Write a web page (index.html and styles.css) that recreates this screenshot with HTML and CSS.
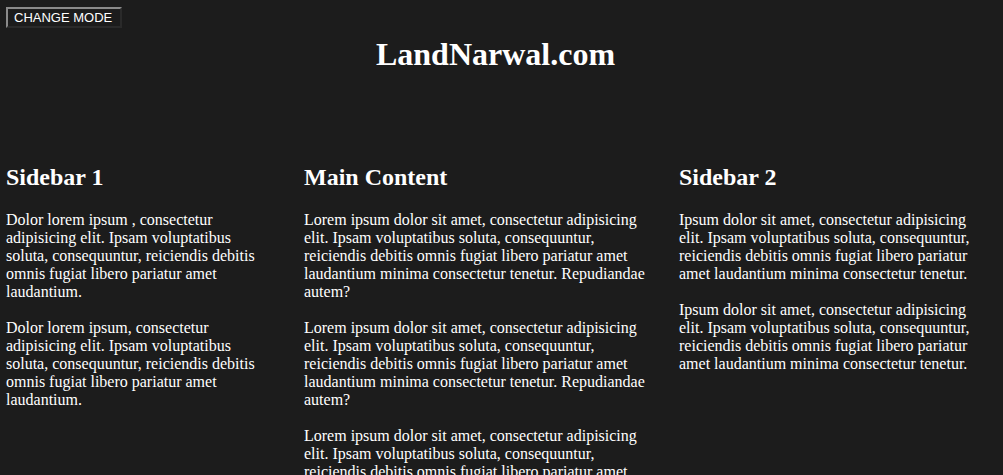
FILE: index.html
```html
<!DOCTYPE html>
<html lang="en">
<head>
<meta charset="utf-8">
<title>LandNarwal.com</title>
<link rel="stylesheet" href="styles.css">
</head>
<body>
<div class="page">
  <header class="header">
    <button class="mode-btn" type="button">CHANGE MODE</button>
    <h1 class="site-title">LandNarwal.com</h1>
  </header>
  <div class="columns">
    <aside class="col col--narrow">
      <h2 class="col-title">Sidebar 1</h2>
      <p class="text">Dolor lorem ipsum , consectetur adipisicing elit. Ipsam voluptatibus soluta, consequuntur, reiciendis debitis omnis fugiat libero pariatur amet laudantium.</p>
      <p class="text">Dolor lorem ipsum, consectetur adipisicing elit. Ipsam voluptatibus soluta, consequuntur, reiciendis debitis omnis fugiat libero pariatur amet laudantium.</p>
    </aside>
    <main class="col">
      <h2 class="col-title">Main Content</h2>
      <p class="text">Lorem ipsum dolor sit amet, consectetur adipisicing elit. Ipsam voluptatibus soluta, consequuntur, reiciendis debitis omnis fugiat libero pariatur amet laudantium minima consectetur tenetur. Repudiandae autem?</p>
      <p class="text">Lorem ipsum dolor sit amet, consectetur adipisicing elit. Ipsam voluptatibus soluta, consequuntur, reiciendis debitis omnis fugiat libero pariatur amet laudantium minima consectetur tenetur. Repudiandae autem?</p>
      <p class="text">Lorem ipsum dolor sit amet, consectetur adipisicing elit. Ipsam voluptatibus soluta, consequuntur, reiciendis debitis omnis fugiat libero pariatur amet laudantium minima consectetur tenetur. Repudiandae autem?</p>
    </main>
    <aside class="col">
      <h2 class="col-title">Sidebar 2</h2>
      <p class="text">Ipsum dolor sit amet, consectetur adipisicing elit. Ipsam voluptatibus soluta, consequuntur, reiciendis debitis omnis fugiat libero pariatur amet laudantium minima consectetur tenetur.</p>
      <p class="text">Ipsum dolor sit amet, consectetur adipisicing elit. Ipsam voluptatibus soluta, consequuntur, reiciendis debitis omnis fugiat libero pariatur amet laudantium minima consectetur tenetur.</p>
    </aside>
  </div>
</div>
</body>
</html>
```
FILE: styles.css
```css
html, body {
  margin: 0;
  background: #1c1c1c;
  color: #ffffff;
  font-family: "Liberation Serif", "Times New Roman", serif;
}

.page {
  padding: 7px 6px 0;
}

.header {
  display: flex;
  flex-direction: column;
  align-items: flex-start;
}

.mode-btn {
  font-family: "Liberation Sans", Arial, sans-serif;
  font-size: 13px;
  line-height: 17px;
  color: #ffffff;
  background: #1c1c1c;
  border: 2px solid;
  border-color: #8a8a8a #2a2a2a #2a2a2a #8a8a8a;
  padding: 0 6px;
  width: 116px;
  text-align: left;
  cursor: pointer;
}

.site-title {
  align-self: stretch;
  margin: 8px 12px 0 0;
  font-size: 32px;
  font-weight: bold;
  text-align: center;
}

.columns {
  display: grid;
  grid-template-columns: 273px 350px 300px;
  column-gap: 25px;
  margin-top: 91px;
}

.col--narrow {
  padding-right: 15px;
}

.col-title {
  margin: 0 0 20px;
  font-size: 24px;
  line-height: 27px;
  font-weight: bold;
}

.text {
  margin: 0 0 18px;
  font-size: 16px;
  line-height: 18px;
}
```
